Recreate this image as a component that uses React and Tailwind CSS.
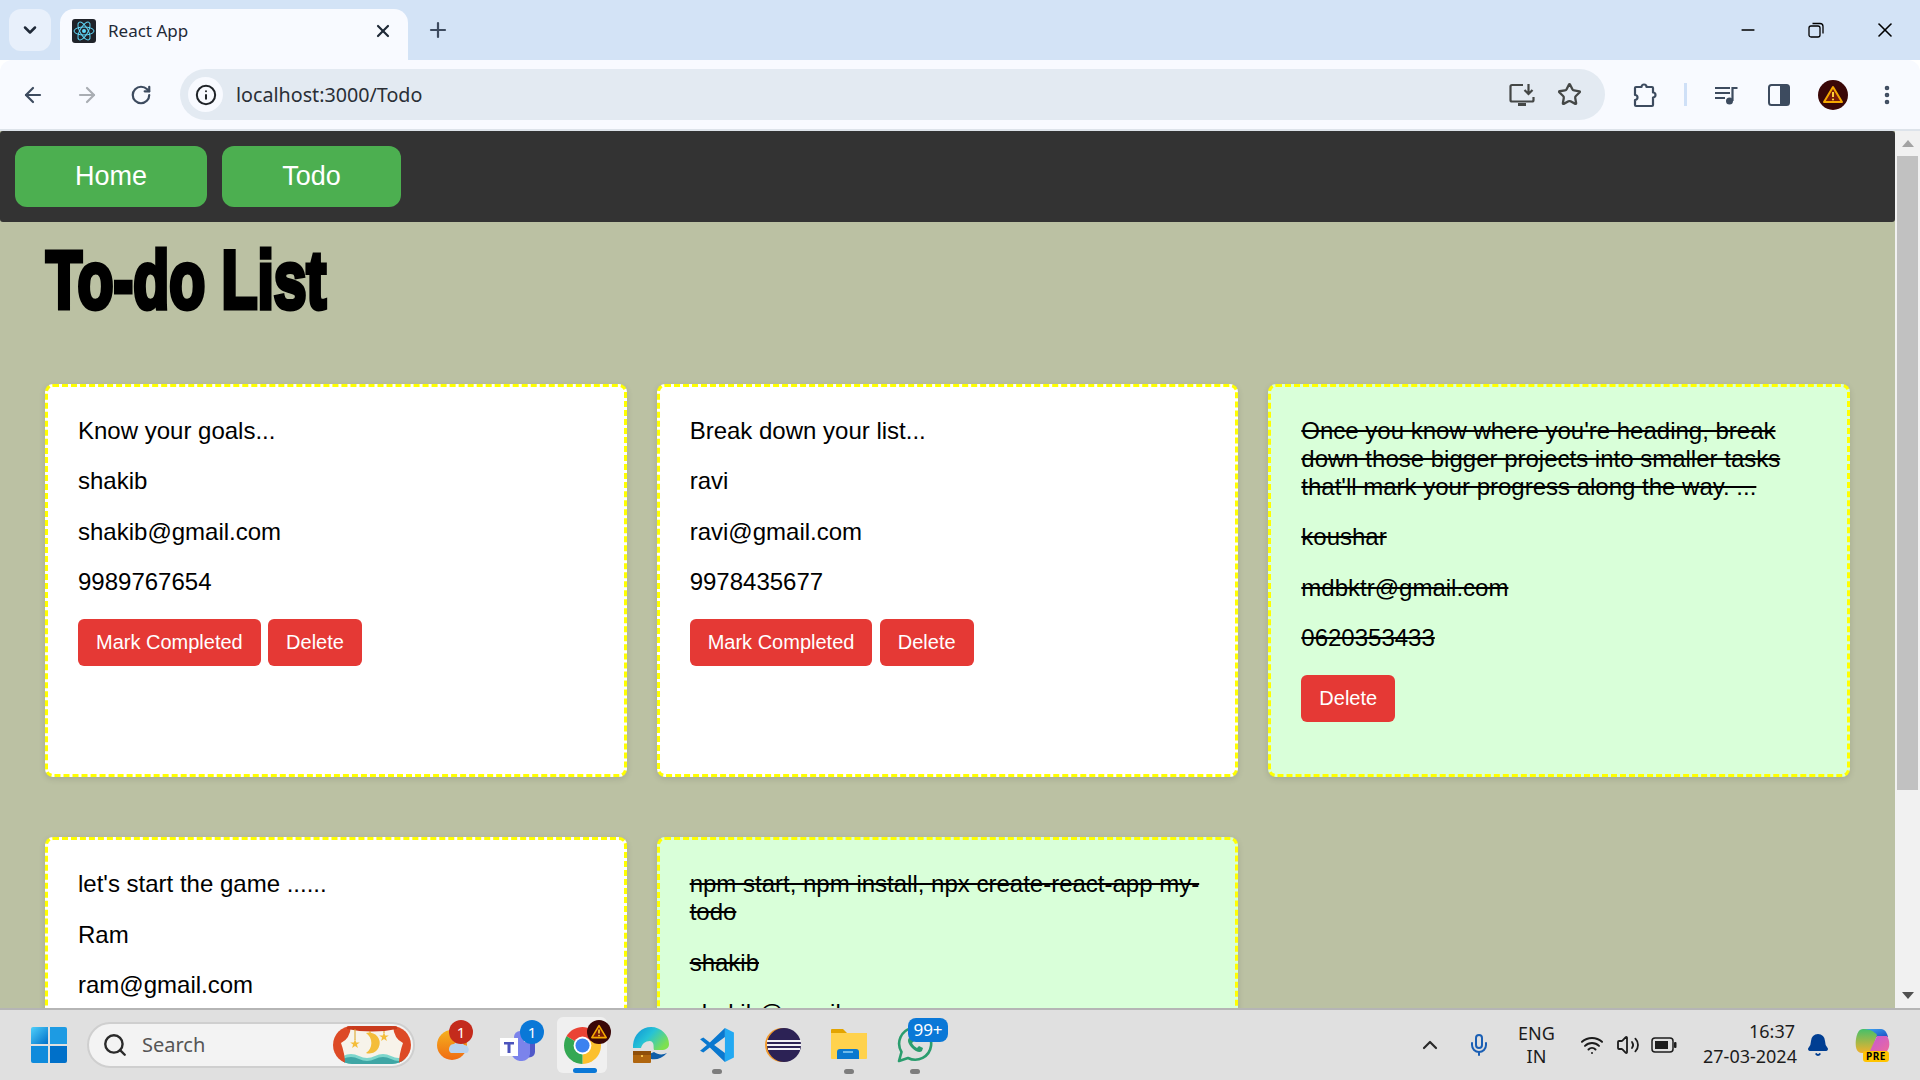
import {
  ArrowLeft, ArrowRight, RotateCw, Info, X, Plus, ChevronDown, ChevronUp, Star, EllipsisVertical,
  Minus, Search, Mic, Wifi, Volume2, Bell,
} from 'lucide-react'

// the last row runs under the taskbar, its buttons are never on screen
const todos = [
  { lines: ['Know your goals...', 'shakib', 'shakib@gmail.com', '9989767654'], done: false },
  { lines: ['Break down your list...', 'ravi', 'ravi@gmail.com', '9978435677'], done: false },
  { lines: ["Once you know where you're heading, break down those bigger projects into smaller tasks that'll mark your progress along the way. ...", 'koushar', 'mdbktr@gmail.com', '0620353433'], done: true },
  { lines: ["let's start the game ......", 'Ram', 'ram@gmail.com'], done: false, clipped: true },
  { lines: ['npm start, npm install, npx create-react-app my-todo', 'shakib', 'shakib@gmail.com'], done: true, clipped: true },
]

function ReactLogo() {
  return (
    <svg viewBox="0 0 24 24" className="w-6 h-6 rounded-[3px] bg-[#20232a]">
      <g fill="none" stroke="#61dafb" strokeWidth="1">
        <ellipse cx="12" cy="12" rx="10" ry="4" />
        <ellipse cx="12" cy="12" rx="10" ry="4" transform="rotate(60 12 12)" />
        <ellipse cx="12" cy="12" rx="10" ry="4" transform="rotate(120 12 12)" />
      </g>
      <circle cx="12" cy="12" r="2" fill="#61dafb" />
    </svg>
  )
}

function InstallIcon() {
  return (
    <svg viewBox="0 0 26 24" className="w-[26px] h-6" fill="none" stroke="#444746" strokeWidth="2.2">
      <path d="M14 2H3a1.500 1.500 0 0 0-1.500 1.500V17A1.500 1.500 0 0 0 3 18.500h20a1.500 1.500 0 0 0 1.500-1.500v-3" />
      <path d="M19.500 1v9M15.500 7l4 4 4-4" />
      <path d="M9 21.500h8" strokeWidth="3" />
    </svg>
  )
}

function PuzzleIcon() {
  return (
    <svg viewBox="0 0 26 26" className="w-[26px] h-[26px] ml-[27px]" fill="none" stroke="#3d4b5f" strokeWidth="2.2" strokeLinejoin="round">
      <path d="M4 5H9.500a2.500 2.500 0 0 1 5 0H20a1 1 0 0 1 1 1V10.500a2.500 2.500 0 0 1 0 5V23a1 1 0 0 1-1 1H4a1 1 0 0 1-1-1V18a2.500 2.500 0 0 0 0-5V6a1 1 0 0 1 1-1z" />
    </svg>
  )
}

function QueueIcon() {
  return (
    <svg viewBox="0 0 24 20" className="w-6 h-5 ml-[27px]" fill="none" stroke="#3d4b5f" strokeWidth="2.200">
      <path d="M1 3h15M1 8h15M1 13h10" />
      <path d="M18.500 16V3h5" />
      <circle cx="15.500" cy="16" r="3.500" fill="#3d4b5f" stroke="none" />
    </svg>
  )
}

function SidePanelIcon() {
  return (
    <svg viewBox="0 0 22 22" className="w-[22px] h-[22px]">
      <rect x="1" y="1" width="20" height="20" rx="2.500" fill="none" stroke="#3d4b5f" strokeWidth="2" />
      <path d="M12 1h7a2 2 0 0 1 2 2v16a2 2 0 0 1-2 2h-7z" fill="#3d4b5f" />
    </svg>
  )
}

function WarnBadge({ className }) {
  return (
    <svg viewBox="0 0 30 30" className={className}>
      <circle cx="15" cy="15" r="15" fill="#3a0707" />
      <path d="M15 7 L24 22 H6 Z" fill="#7a1b08" stroke="#f5a800" strokeWidth="2" strokeLinejoin="round" />
      <path d="M15 12v5" stroke="#ffd23a" strokeWidth="2" />
      <circle cx="15" cy="19.500" r="1.100" fill="#ffd23a" />
    </svg>
  )
}

function RestoreIcon() {
  return (
    <svg viewBox="0 0 16 16" className="w-4 h-4" fill="none" stroke="#000" strokeWidth="1.300">
      <rect x="1" y="4" width="11" height="11" rx="2" />
      <path d="M4.500 1.500h7.500a3 3 0 0 1 3 3v7" />
    </svg>
  )
}

function WindowsLogo() {
  return (
    <svg viewBox="0 0 36 36" className="w-9 h-9">
      <defs>
        <linearGradient id="win" x1="0" y1="0" x2="1" y2="1">
          <stop offset="0" stopColor="#4fd0fb" />
          <stop offset="1" stopColor="#0070c9" />
        </linearGradient>
      </defs>
      <path d="M2 0h15v17H0V2a2 2 0 0 1 2-2z" fill="url(#win)" />
      <path d="M19 0h15a2 2 0 0 1 2 2v15H19z" fill="#1d9be3" />
      <path d="M0 19h17v17H2a2 2 0 0 1-2-2z" fill="#0f8bdc" />
      <path d="M19 19h17v15a2 2 0 0 1-2 2H19z" fill="#0070c9" />
    </svg>
  )
}

const starPoints = '0,-5 1.200,-1.600 4.800,-1.500 1.900,0.600 2.900,4 0,2 -2.900,4 -1.900,0.600 -4.800,-1.500 -1.200,-1.600'

function SearchArt() {
  return (
    <svg viewBox="0 0 78 38" className="w-[78px] h-[38px] rounded-[19px]">
      <rect width="78" height="38" fill="#f7f3ea" />
      <path d="M10 30 Q18 26 26 30 T42 30 T58 30 T72 30 V38 H10z" fill="#7dd6cc" />
      <path d="M10 33 Q18 29 26 33 T42 33 T58 33 T72 33 V38 H10z" fill="#3fa6a5" />
      <path d="M0 0 H18 Q17 13 8 17 Q12 28 12 38 H0z" fill="#dd4a26" />
      <path d="M78 0 H60 Q61 13 70 17 Q66 28 66 38 H78z" fill="#dd4a26" />
      <path d="M14 0H64V3Q39 8 14 3z" fill="#c93a1c" />
      <path d="M22 3V14M51 5V7M37 5V7" stroke="#d9a21d" strokeWidth="1" />
      <path d="M33 7A10.500 10.500 0 1 1 33 27A12 12 0 0 0 33 7Z" fill="#f4bd3a" />
      <polygon points={starPoints} transform="translate(22 18)" fill="#f4bd3a" />
      <polygon points={starPoints} transform="translate(51 11)" fill="#f4bd3a" />
    </svg>
  )
}

function Weather() {
  return (
    <svg viewBox="0 0 34 32" className="w-[34px] h-8">
      <defs>
        <linearGradient id="sun" x1="0" y1="0" x2="0" y2="1">
          <stop offset="0" stopColor="#f5b21f" />
          <stop offset="1" stopColor="#f06b12" />
        </linearGradient>
      </defs>
      <circle cx="15" cy="16" r="15" fill="url(#sun)" />
      <path d="M14 24a5 5 0 0 1 3-9 6 6 0 0 1 10 1 4.500 4.500 0 0 1 3 8z" fill="#b9d3ee" />
    </svg>
  )
}

function Teams() {
  return (
    <svg viewBox="0 0 36 32" className="w-9 h-8">
      <circle cx="20" cy="8" r="6" fill="#7b83eb" />
      <circle cx="31" cy="10" r="4" fill="#5059c9" />
      <path d="M25 13h10v10a6 6 0 0 1-10 4z" fill="#5059c9" />
      <path d="M11 13h19v12a8 8 0 0 1-8 7 10 10 0 0 1-11-9z" fill="#7b83eb" />
      <rect x="0" y="9" width="18" height="18" fill="#fff" />
      <path d="M4 13h10v2.500h-3.500V24h-3v-8.500H4z" fill="#4b53bc" />
    </svg>
  )
}

function Chrome() {
  return (
    <svg viewBox="0 0 100 100" className="w-[37px] h-[37px]">
      <path d="M50 50 L6.700 25 A50 50 0 0 1 93.300 25 Z" fill="#ea4335" />
      <path d="M50 50 L93.300 25 A50 50 0 0 1 50 100 Z" fill="#fbc02d" />
      <path d="M50 50 L50 100 A50 50 0 0 1 6.700 25 Z" fill="#34a853" />
      <circle cx="50" cy="50" r="24" fill="#fff" />
      <circle cx="50" cy="50" r="19" fill="#3b82f0" />
    </svg>
  )
}

function Edge() {
  return (
    <svg viewBox="0 0 36 36" className="w-9 h-9">
      <defs>
        <linearGradient id="edge" x1="0" y1="0" x2="1" y2="0.600">
          <stop offset="0" stopColor="#0c8fd6" />
          <stop offset="0.500" stopColor="#26c3d6" />
          <stop offset="1" stopColor="#7ee04f" />
        </linearGradient>
      </defs>
      <path d="M0 18C1 7 9 0 18 0c10 0 18 8 18 17 0 4-3 6-8 6H21c-1-3 1-8-4-9-5 0-8 3-9 7H0z" fill="url(#edge)" />
      <path d="M14 30c5 4 14 3 20-4-4 2-9 2-13-1l-7 3z" fill="#0f5ea8" />
      <rect x="0" y="24" width="18" height="12" rx="1" fill="#b0660f" />
      <rect x="0" y="24" width="18" height="4" fill="#8f4f0a" />
      <rect x="8" y="28" width="2" height="2" fill="#f4c04a" />
    </svg>
  )
}

function VSCode() {
  return (
    <svg viewBox="0 0 100 100" className="w-9 h-9">
      <path d="M72 3 L30 43 L12 29 L3 34 L22 50 L3 66 L12 71 L30 57 L72 97 V72 L42 50 L72 28 Z" fill="#0a78cf" />
      <path d="M72 3 L97 15 V85 L72 97 Z" fill="#23a9f2" />
    </svg>
  )
}

function Eclipse() {
  return (
    <svg viewBox="0 0 36 36" className="w-9 h-9">
      <circle cx="17" cy="18" r="17" fill="#f29b2e" />
      <circle cx="19" cy="18" r="17" fill="#2c2255" />
      <path d="M2 13h34v2H2zM2 17h34v2H2zM3 21h32v2H3z" fill="#f2f1f6" />
    </svg>
  )
}

function Folder() {
  return (
    <svg viewBox="0 0 36 36" className="w-9 h-9">
      <path d="M0 3a1 1 0 0 1 1-1h11l4 4h19a1 1 0 0 1 1 1v3H0z" fill="#e3a400" />
      <path d="M0 6h36v25a1 1 0 0 1-1 1H1a1 1 0 0 1-1-1z" fill="#ffd24d" />
      <path d="M6 32v-7a3 3 0 0 1 3-3h16a3 3 0 0 1 3 3v7z" fill="#0a78cf" />
      <path d="M12 25h10" stroke="#8fd0f5" strokeWidth="1.500" />
    </svg>
  )
}

function WhatsApp() {
  return (
    <svg viewBox="0 0 36 36" className="w-9 h-9">
      <path d="M2 34l2.500-9A16 16 0 1 1 11 31z" fill="none" stroke="#2a9d6e" strokeWidth="2.600" strokeLinejoin="round" />
      <path d="M12 11c-2 2-1 6 3 10s8 5 10 3l1-3-4-2-2 2c-2-1-4-3-5-5l2-2-2-4z" fill="#2a9d6e" />
    </svg>
  )
}

function Copilot() {
  return (
    <div className="relative w-9 h-9">
      <svg viewBox="0 0 36 36" className="w-9 h-9">
        <defs>
          <linearGradient id="cp1" x1="0" y1="0" x2="1" y2="1">
            <stop offset="0" stopColor="#3fa7f2" />
            <stop offset="1" stopColor="#1c4fc4" />
          </linearGradient>
          <linearGradient id="cp2" x1="0" y1="0" x2="0" y2="1">
            <stop offset="0" stopColor="#45c06a" />
            <stop offset="1" stopColor="#f3b12b" />
          </linearGradient>
          <linearGradient id="cp3" x1="0" y1="0" x2="1" y2="1">
            <stop offset="0" stopColor="#c05ad8" />
            <stop offset="1" stopColor="#f06a9a" />
          </linearGradient>
        </defs>
        <path d="M8 2h18c4 0 6 4 7 8H14z" fill="url(#cp1)" />
        <path d="M8 2c-4 0-6 4-7 10-1 7 0 14 6 14h9l6-18C19 4 14 2 8 2z" fill="url(#cp2)" />
        <path d="M22 9h10c4 6 3 17-5 17H14z" fill="url(#cp3)" />
      </svg>
      <span className="absolute left-[8px] top-[24px] bg-[#ffc400] rounded-[3px] px-[3px] text-[10px] leading-[11px] font-bold tracking-[0.5px] text-black">PRE</span>
    </div>
  )
}

function CountBadge({ children, className }) {
  return (
    <span className={`absolute flex items-center justify-center text-white font-['Noto_Sans',sans-serif] ${className}`}>
      {children}
    </span>
  )
}

function TodoCard({ todo }) {
  const textClass = todo.done ? 'line-through' : ''
  return (
    <div className={`border-[3px] border-dashed border-[#ffff00] rounded-[8px] px-[30px] pt-[30px] pb-[30px] shadow-[0_2px_6px_rgba(0,0,0,0.12)] ${todo.done ? 'bg-[#d9ffd9]' : 'bg-white'}`}>
      {todo.lines.map((line, i) => (
        <p key={i} className={`text-[24px] leading-[28px] mb-[22.4px] text-black ${textClass}`}>{line}</p>
      ))}
      {!todo.clipped && (
        <div className="flex gap-[7.400px] mb-[22.4px]">
          {!todo.done && (
            <button className="h-[47px] px-[18px] bg-[#e53935] text-white text-[20px] rounded-[6px]">Mark Completed</button>
          )}
          <button className="h-[47px] px-[18px] bg-[#e53935] text-white text-[20px] rounded-[6px]">Delete</button>
        </div>
      )}
    </div>
  )
}

export default function App() {
  return (
    <div className="w-[1920px] h-[1080px] overflow-hidden flex flex-col font-['Liberation_Sans',Arial,sans-serif]">

      {/* tab strip */}
      <div className="h-[60px] shrink-0 bg-[#d3e3f6] flex items-end pl-[9px] font-['Noto_Sans',sans-serif]">
        <div className="w-[42px] h-[42px] mb-[9px] rounded-[12px] bg-[#e8f0fb] flex items-center justify-center">
          <ChevronDown size={20} strokeWidth={3} color="#1f2937" />
        </div>
        <div className="relative ml-[9px] w-[348px] h-[51px] bg-[#f8faff] rounded-t-[14px] flex items-center pl-[12px] pr-[15px] pb-[7px]">
          <ReactLogo />
          <span className="ml-[12px] text-[17px] text-[#1f2937] flex-1">React App</span>
          <X size={20} strokeWidth={2.6} color="#1f2937" />
        </div>
        <div className="ml-[18px] mb-[18px] w-6 h-6 flex items-center justify-center">
          <Plus size={24} strokeWidth={2.2} color="#3d4b5f" />
        </div>
        <div className="ml-auto h-full flex items-center">
          <div className="w-[68px] pr-[4px] flex justify-center"><Minus size={20} strokeWidth={2} color="#000" /></div>
          <div className="w-[68px] pr-[4px] flex justify-center"><RestoreIcon /></div>
          <div className="w-[68px] pr-[2px] flex justify-center"><X size={24} strokeWidth={1.6} color="#000" /></div>
        </div>
      </div>

      {/* toolbar */}
      <div className="h-[69px] shrink-0 bg-[#f8faff] rounded-t-[12px] flex items-center pl-[21px]">
        <ArrowLeft size={24} strokeWidth={2.2} color="#3d4b5f" />
        <ArrowRight size={24} strokeWidth={2.2} color="#a9adb3" className="ml-[30px]" />
        <RotateCw size={22} strokeWidth={2.4} color="#3d4b5f" className="ml-[31px]" />
        <div className="ml-[28px] w-[1425px] h-[51px] rounded-full bg-[#e3eaf2] flex items-center pl-[8px] pr-[23px]">
          <div className="w-[35px] h-[35px] rounded-full bg-[#f8faff] flex items-center justify-center">
            <Info size={22} strokeWidth={2.2} color="#1f2328" />
          </div>
          <span className="ml-[13px] text-[19.700px] text-[#2a2f36] font-['Noto_Sans',sans-serif] flex-1">localhost:3000/Todo</span>
          <InstallIcon />
          <Star size={25} strokeWidth={2.2} color="#444746" className="ml-[22px]" />
        </div>
        <PuzzleIcon />
        <div className="ml-[26px] w-[3px] h-[23px] bg-[#cfe0f7]" />
        <QueueIcon />
        <div className="ml-[30px]"><SidePanelIcon /></div>
        <WarnBadge className="ml-[28px] w-[30px] h-[30px]" />
        <EllipsisVertical size={24} strokeWidth={2.6} color="#3d4b5f" className="ml-[27px]" />
      </div>
      <div className="h-[2px] shrink-0 bg-[#dde3ea]" />

      {/* page + scrollbar */}
      <div className="flex-1 min-h-0 flex overflow-hidden">
        <div className="flex-1 min-w-0 bg-[#bbc1a3] overflow-hidden">
          <nav className="h-[91px] bg-[#333333] rounded-[3px] flex items-center gap-[15px] pl-[15px]">
            <button className="h-[61px] w-[192px] bg-[#4caf50] text-white text-[27px] rounded-[12px]">Home</button>
            <button className="h-[61px] w-[179px] bg-[#4caf50] text-white text-[27px] rounded-[12px]">Todo</button>
          </nav>
          <div className="h-[162px] pl-[46px] pt-[17px]">
            <h1 className="text-[82px] leading-[82px] font-bold text-black whitespace-nowrap origin-left scale-x-[0.718] [-webkit-text-stroke:5px_black]">To-do List</h1>
          </div>
          <div className="grid grid-cols-3 gap-x-[30px] gap-y-[60.500px] ml-[45px] mr-[45px]">
            {todos.map((todo, i) => <TodoCard key={i} todo={todo} />)}
          </div>
        </div>

        <div className="w-[25px] shrink-0 bg-[#f1f1f1] flex flex-col items-center">
          <div className="h-[25px] flex items-center justify-center">
            <div className="w-0 h-0 border-x-[6px] border-x-transparent border-b-[7px] border-b-[#a3a3a3]" />
          </div>
          <div className="w-[21px] h-[634px] bg-[#c1c1c1]" />
          <div className="mt-auto h-[25px] flex items-center justify-center">
            <div className="w-0 h-0 border-x-[6px] border-x-transparent border-t-[7px] border-t-[#505050]" />
          </div>
        </div>
      </div>

      {/* taskbar */}
      <div className="h-[72px] shrink-0 bg-[#e0e0e0] border-t-2 border-[#b5b5b5] flex items-center font-['Noto_Sans',sans-serif]">
        <div className="ml-[31px]"><WindowsLogo /></div>
        <div className="ml-[20px] w-[328px] h-[46px] rounded-full bg-[#f3f3f3] border-2 border-[#cfcfcf] flex items-center pl-[13px] pr-[2px]">
          <Search size={26} strokeWidth={2.2} color="#2a2a2a" />
          <span className="ml-[14px] text-[20px] text-[#555] flex-1">Search</span>
          <SearchArt />
        </div>
        <div className="relative ml-[22px] w-[34px] h-8">
          <Weather />
          <CountBadge className="left-[12px] -top-[9px] w-6 h-6 rounded-full bg-[#c42b1c] text-[15px]">1</CountBadge>
        </div>
        <div className="relative ml-[29px] w-9 h-8">
          <Teams />
          <CountBadge className="left-[20px] -top-[9px] w-6 h-6 rounded-full bg-[#0a78d7] text-[15px]">1</CountBadge>
        </div>
        <div className="relative ml-[21px] w-[50px] h-[56px] rounded-[6px] bg-[#f0f0f0] flex items-center justify-center">
          <Chrome />
          <WarnBadge className="absolute left-[30px] top-[3px] w-6 h-6" />
          <div className="absolute left-[16px] bottom-0 w-6 h-[5px] rounded-full bg-[#0a78d7]" />
        </div>
        <div className="ml-[26px]"><Edge /></div>
        <div className="relative ml-[30px]">
          <VSCode />
          <div className="absolute left-[13px] top-[42px] w-[10px] h-[5px] rounded-full bg-[#7d7d7d]" />
        </div>
        <div className="ml-[30px]"><Eclipse /></div>
        <div className="relative ml-[30px]">
          <Folder />
          <div className="absolute left-[13px] top-[42px] w-[10px] h-[5px] rounded-full bg-[#7d7d7d]" />
        </div>
        <div className="relative ml-[30px]">
          <WhatsApp />
          <CountBadge className="left-[11px] -top-[9px] w-10 h-6 rounded-[8px] bg-[#0a78d7] text-[17px]">99+</CountBadge>
          <div className="absolute left-[13px] top-[42px] w-[10px] h-[5px] rounded-full bg-[#7d7d7d]" />
        </div>

        <div className="ml-auto flex items-center text-[#1c1c1c]">
          <ChevronUp size={24} strokeWidth={2.2} color="#2a2a2a" />
          <Mic size={24} strokeWidth={2} color="#1a5fb4" className="ml-[25px]" />
          <div className="ml-[10.500px] w-[70px] text-center text-[18px] leading-[23px]">
            <div>ENG</div>
            <div>IN</div>
          </div>
          <Wifi size={24} strokeWidth={2} color="#1c1c1c" className="ml-[8.500px]" />
          <Volume2 size={24} strokeWidth={1.8} color="#1c1c1c" className="ml-[12px]" />
          <svg viewBox="0 0 26 16" className="w-[26px] h-4 ml-[11px]">
            <rect x="1" y="1" width="21" height="14" rx="3" fill="none" stroke="#1c1c1c" strokeWidth="1.500" />
            <rect x="4" y="4" width="13" height="8" fill="#1c1c1c" />
            <rect x="23" y="5" width="2.500" height="6" rx="1" fill="#1c1c1c" />
          </svg>
          <div className="ml-[26px] -mt-[2px] w-[92px] text-right text-[18px] leading-[25px] whitespace-nowrap">
            <div>16:37</div>
            <div>27-03-2024</div>
          </div>
          <Bell size={24} strokeWidth={2} color="#003e92" fill="#003e92" className="ml-[11px]" />
          <div className="ml-[25px] mr-[29px]"><Copilot /></div>
        </div>
      </div>
    </div>
  )
}
